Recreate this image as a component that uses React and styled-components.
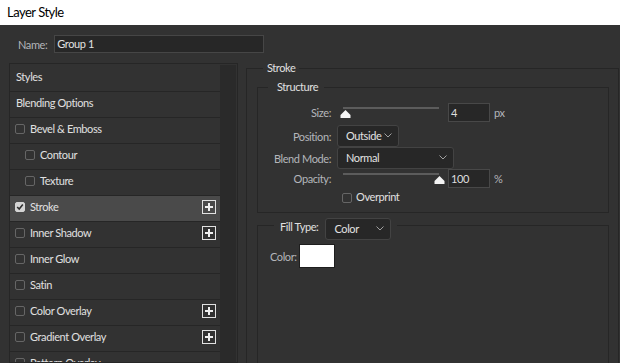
import React from 'react';
import styled, { createGlobalStyle } from 'styled-components';

const Global = createGlobalStyle`
  *, *::before, *::after { box-sizing: border-box; }
  html, body { margin: 0; padding: 0; background: #323232; }
  body {
    width: 620px; height: 363px; overflow: hidden;
    font-family: Lato, "Noto Sans", sans-serif;
    font-size: 11px;
    letter-spacing: -0.4px;
  }
  #root { height: 363px; }
`;

const Window = styled.div`
  width: 620px; height: 363px; overflow: hidden;
  display: flex; flex-direction: column;
  background: #323232;
`;

const TitleBar = styled.div`
  flex: none; height: 25px; background: #ffffff; color: #000;
  font-size: 13px; letter-spacing: -0.5px; line-height: 25px; padding-left: 7px;
`;

const Body = styled.div`
  flex: 1; min-height: 0; display: flex; flex-direction: column;
  padding: 10px 0 0 9px;
`;

const NameRow = styled.div`
  flex: none; display: flex; align-items: center; gap: 7px;
  height: 18px; padding-left: 9px;
`;

const Label = styled.span`
  color: ${p => (p.$bright ? '#e0e0e0' : '#b4b6bb')};
  font-size: 11px; white-space: nowrap;
`;

const TextInput = styled.div`
  width: 210px; height: 18px; border: 1px solid #464646; background: #272727;
  color: #e2e2e2; font-size: 11px; line-height: 16px; padding-left: 2px;
`;

const Main = styled.div`
  flex: 1; min-height: 0; display: flex; gap: 8px; margin-top: 8px;
`;

const List = styled.div`
  flex: none; width: 229px; margin-top: 2px; border: 1px solid #262626;
  padding: 1px 1px 0 0; display: flex; overflow: hidden;
`;

const Rows = styled.div`
  width: 210px; display: flex; flex-direction: column; padding-top: 1px;
`;

const Scrollbar = styled.div`
  width: 16px; background: #2a2a2a;
`;

const Row = styled.div`
  flex: none; height: 26px; border-bottom: 1px solid #262626;
  display: flex; align-items: center; gap: 5px;
  padding: 0 4px 3px ${p => p.$indent}px;
  background: ${p => (p.$active ? '#4a4a4a' : 'transparent')};
  color: #e0e0e0; font-size: 11px; white-space: nowrap;
`;

const RowText = styled.span`
  margin-bottom: 2px;
`;

const Box = styled.span`
  flex: none; width: 10px; height: 10px; border-radius: 2px;
  border: 1px solid ${p => (p.$checked ? '#d4d4d4' : '#666')};
  background: ${p => (p.$checked ? '#d4d4d4' : 'transparent')};
  display: flex; align-items: center; justify-content: center;
`;

const PlusBtn = styled.span`
  margin-left: auto; flex: none; width: 14px; height: 14px;
  border: 1px solid #e2e2e2; display: flex; align-items: center; justify-content: center;
`;

const Group = styled.fieldset`
  margin: ${p => p.$margin || 0};
  min-width: 0;
  border: 1px solid #262626;
  padding: ${p => p.$pad};
  ${p => (p.$grow ? 'flex: 1;' : '')}
  ${p => (p.$minH ? `min-height: ${p.$minH}px;` : '')}
  display: flex; flex-direction: column;
`;

const Legend = styled.legend`
  margin-left: ${p => p.$ml}px;
  padding: ${p => p.$pad};
  font-size: 11px; line-height: 14px; height: 14px;
  color: #e0e0e0;
  display: flex; align-items: flex-start; gap: 7px; overflow: visible;
`;

const FormRow = styled.div`
  flex: none; display: grid; grid-template-columns: 73px auto; column-gap: 6px;
  align-items: center; height: ${p => p.$h}px; margin-top: ${p => p.$mt || 0}px;
`;

const RightLabel = styled(Label)`
  text-align: right;
`;

const Controls = styled.div`
  display: flex; align-items: center;
`;

const Slider = styled.div`
  position: relative; width: 96px; height: 19px; margin-left: 6px; margin-right: 9px;
`;

const Track = styled.div`
  margin-top: 4px; height: 2px; background: #5c5c5c;
`;

const Thumb = styled.svg`
  position: absolute; top: 7px; width: 11px; height: 8px; margin-left: -5px;
`;

const NumInput = styled.div`
  width: 42px; height: 19px; border: 1px solid #484848; background: #272727;
  color: #dedede; font-size: 11px; line-height: 17px; padding-left: 2px;
`;

const Unit = styled.span`
  margin-left: 4px; color: #b4b6bb; font-size: 11px;
`;

const Select = styled.div`
  width: ${p => p.$w}px; height: 22px; border: 1px solid #434343; border-radius: 3px;
  background: #272727; color: #e2e2e2; font-size: 11px;
  display: flex; align-items: center; justify-content: space-between;
  padding: 0 6px 1px 8px; flex: none;
`;

const CheckLabel = styled.label`
  display: flex; align-items: center; gap: 4px; color: #e0e0e0; font-size: 11px;
  margin-left: 5px;
`;

const ColorRow = styled.div`
  display: flex; align-items: center; gap: 2px;
`;

const Swatch = styled.div`
  width: 36px; height: 24px; background: #ffffff; border: 1px solid #1e1e1e;
`;

const Chevron = () => (
  <svg width="8" height="5" viewBox="0 0 8 5">
    <path d="M0.5 0.5 L4 4 L7.5 0.5" fill="none" stroke="#a0a0a0" strokeWidth="1" />
  </svg>
);

const Plus = () => (
  <PlusBtn>
    <svg width="10" height="10" viewBox="0 0 10 10">
      <rect x="1" y="4" width="8" height="2" fill="#f0f0f0" />
      <rect x="4" y="1" width="2" height="8" fill="#f0f0f0" />
    </svg>
  </PlusBtn>
);

const Check = ({ checked }) => (
  <Box $checked={checked}>
    {checked && (
      <svg width="8" height="8" viewBox="0 0 8 8">
        <path d="M1.2 4 L3.2 6 L6.8 1.6" fill="none" stroke="#2e2e2e" strokeWidth="1.6" />
      </svg>
    )}
  </Box>
);

const ThumbIcon = ({ pct }) => (
  <Thumb viewBox="0 0 11 8" style={{ left: `${pct}%` }}>
    <path d="M5.5 0 L10.5 5 L10.5 8 L0.5 8 L0.5 5 Z" fill="#f4f4f4" />
  </Thumb>
);

const styles = [
  { name: 'Styles', kind: 'head' },
  { name: 'Blending Options', kind: 'head' },
  { name: 'Bevel & Emboss' },
  { name: 'Contour', kind: 'sub' },
  { name: 'Texture', kind: 'sub' },
  { name: 'Stroke', checked: true, plus: true, active: true },
  { name: 'Inner Shadow', plus: true },
  { name: 'Inner Glow' },
  { name: 'Satin' },
  { name: 'Color Overlay', plus: true },
  { name: 'Gradient Overlay', plus: true },
  { name: 'Pattern Overlay' },
  { name: 'Outer Glow' },
  { name: 'Drop Shadow', plus: true },
];

const indentFor = kind => (kind === 'head' ? 6 : kind === 'sub' ? 15 : 5);

export default function App() {
  return (
    <Window>
      <Global />
      <TitleBar>Layer Style</TitleBar>
      <Body>
        <NameRow>
          <Label>Name:</Label>
          <TextInput>Group 1</TextInput>
        </NameRow>
        <Main>
          <List>
            <Rows>
              {styles.map(s => (
                <Row key={s.name} $indent={indentFor(s.kind)} $active={s.active}>
                  {s.kind !== 'head' && <Check checked={s.checked} />}
                  <RowText>{s.name}</RowText>
                  {s.plus && <Plus />}
                </Row>
              ))}
            </Rows>
            <Scrollbar />
          </List>
          <Group $pad="5px 9px 0 10px" $margin="0 1px 0 0" $grow $minH={420}>
            <Legend $ml={6} $pad="0 4px">Stroke</Legend>
            <Group $pad="9px 0 8px 0">
              <Legend $ml={10} $pad="0 6px 0 9px">Structure</Legend>
              <FormRow $h={19}>
                <RightLabel>Size:</RightLabel>
                <Controls>
                  <Slider>
                    <Track />
                    <ThumbIcon pct={1.6} />
                  </Slider>
                  <NumInput>4</NumInput>
                  <Unit>px</Unit>
                </Controls>
              </FormRow>
              <FormRow $h={22} $mt={3}>
                <RightLabel>Position:</RightLabel>
                <Controls>
                  <Select $w={62}><span>Outside</span><Chevron /></Select>
                </Controls>
              </FormRow>
              <FormRow $h={22}>
                <RightLabel>Blend Mode:</RightLabel>
                <Controls>
                  <Select $w={117}><span>Normal</span><Chevron /></Select>
                </Controls>
              </FormRow>
              <FormRow $h={19}>
                <RightLabel>Opacity:</RightLabel>
                <Controls>
                  <Slider>
                    <Track />
                    <ThumbIcon pct={100} />
                  </Slider>
                  <NumInput>100</NumInput>
                  <Unit>%</Unit>
                </Controls>
              </FormRow>
              <FormRow $h={14} $mt={2}>
                <span />
                <Controls>
                  <CheckLabel><Check /><RowText>Overprint</RowText></CheckLabel>
                </Controls>
              </FormRow>
            </Group>
            <Group $pad="12px 0 0 12px" $margin="5px 0 0 0" $grow>
              <Legend $ml={4} $pad="0 6px">
                <Label $bright style={{ lineHeight: '18px' }}>Fill Type:</Label>
                <Select $w={66}><span>Color</span><Chevron /></Select>
              </Legend>
              <ColorRow>
                <Label>Color:</Label>
                <Swatch />
              </ColorRow>
            </Group>
          </Group>
        </Main>
      </Body>
    </Window>
  );
}
